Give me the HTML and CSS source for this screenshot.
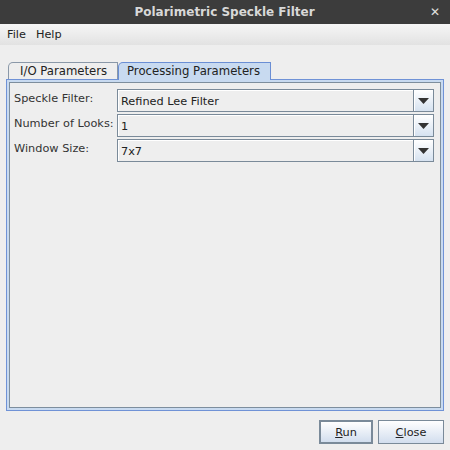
FILE: index.html
```html
<!DOCTYPE html>
<html>
<head>
<meta charset="utf-8">
<link rel="stylesheet" href="styles.css">
</head>
<body>
<div class="window">
  <div class="titlebar">
    <span class="title">Polarimetric Speckle Filter</span>
    <span class="close">✕</span>
  </div>
  <div class="menubar">
    <span class="menu">File</span>
    <span class="menu">Help</span>
  </div>
  <div class="main">
    <div class="tabs">
      <div class="tab io">I/O Parameters</div>
      <div class="tab active">Processing Parameters</div>
    </div>
    <div class="panel">
      <div class="inner">
        <div class="form">
          <div class="label">Speckle Filter:</div>
          <div class="combo"><span class="value">Refined Lee Filter</span><span class="arrow"><svg width="11" height="6" viewBox="0 0 11 6"><path d="M0 0H11L5.5 6Z" fill="#333"/></svg></span></div>
          <div class="label">Number of Looks:</div>
          <div class="combo"><span class="value">1</span><span class="arrow"><svg width="11" height="6" viewBox="0 0 11 6"><path d="M0 0H11L5.5 6Z" fill="#333"/></svg></span></div>
          <div class="label">Window Size:</div>
          <div class="combo"><span class="value">7x7</span><span class="arrow"><svg width="11" height="6" viewBox="0 0 11 6"><path d="M0 0H11L5.5 6Z" fill="#333"/></svg></span></div>
        </div>
      </div>
    </div>
    <div class="buttons">
      <button class="btn default"><u>R</u>un</button>
      <button class="btn"><u>C</u>lose</button>
    </div>
  </div>
</div>
</body>
</html>
```
FILE: styles.css
```css
* { box-sizing: border-box; }
html, body { margin: 0; padding: 0; }
body {
  width: 450px; height: 450px; overflow: hidden;
  background: #eeeeee;
  font-family: "DejaVu Sans", sans-serif;
  font-size: 11.3px;
  color: #333;
}
.window { width: 450px; height: 450px; display: flex; flex-direction: column; }
.titlebar {
  height: 24px; flex: none; background: #3c3c3c; color: #d8d8d8;
  display: flex; align-items: center; justify-content: center;
  position: relative;
}
.title { font-weight: bold; font-size: 12px; margin-left: -1px; }
.close { position: absolute; right: 10px; top: 5px; font-size: 12px; font-weight: bold; color: #e0e0e0; }
.menubar {
  height: 21px; flex: none; background: linear-gradient(#f6f6f6, #e2e2e2);
  display: flex; align-items: center; padding-left: 7px; gap: 10px;
  color: #222;
}
.main { flex: 1; display: flex; flex-direction: column; padding: 17px 6px 0 6px; }
.tabs { display: flex; height: 17px; padding-left: 2px; flex: none; }
.tab {
  height: 17px; line-height: 16px;
  border: 1px solid #8a98a8; border-bottom: none;
  border-radius: 5px 0 0 0;
  background: #eeeeee;
  color: #222;
  white-space: nowrap;
  font-size: 11.7px;
}
.tab.io { width: 110px; padding-left: 11px; }
.tab.active {
  width: 153px; padding-left: 8px;
  background: #c8daf0; border-color: #6a8ed4;
  height: 18px; position: relative; z-index: 1;
}
.panel {
  border: 1px solid #6f92d6;
  background: #c8daf0;
  padding: 2px;
  height: 332px; flex: none;
}
.inner {
  height: 100%;
  border: 1px solid #7d8e9d;
  background: #eeeeee;
  padding: 6px 6px 0 4px;
}
.form {
  display: grid; grid-template-columns: 103px 1fr; row-gap: 2px;
  align-items: center;
}
.label { color: #333; margin-top: -5px; white-space: nowrap; }
.combo {
  height: 23px; display: flex;
  border: 1px solid #7a8a99;
  background: #eeeeee;
  box-shadow: inset 1px 1px 0 #fff;
}
.value { flex: 1; padding-left: 3px; line-height: 23px; color: #222; }
.arrow {
  width: 20px; border-left: 1px solid #7a8a99;
  background: linear-gradient(#ffffff, #d6e2f0);
  display: flex; align-items: center; justify-content: center;
  box-shadow: inset 1px 1px 0 #fff;
}
.buttons { display: flex; justify-content: flex-end; gap: 5px; margin-top: 9px; }
.btn {
  height: 24px; font-family: inherit; font-size: 11.3px; color: #222;
  border: 1px solid #7a8a99; background: linear-gradient(#ffffff, #d2deee);
  padding: 0; margin: 0;
}
.btn.default { border: 2px solid #7a8a99; width: 54px; }
.btn:not(.default) { width: 66px; }
```
